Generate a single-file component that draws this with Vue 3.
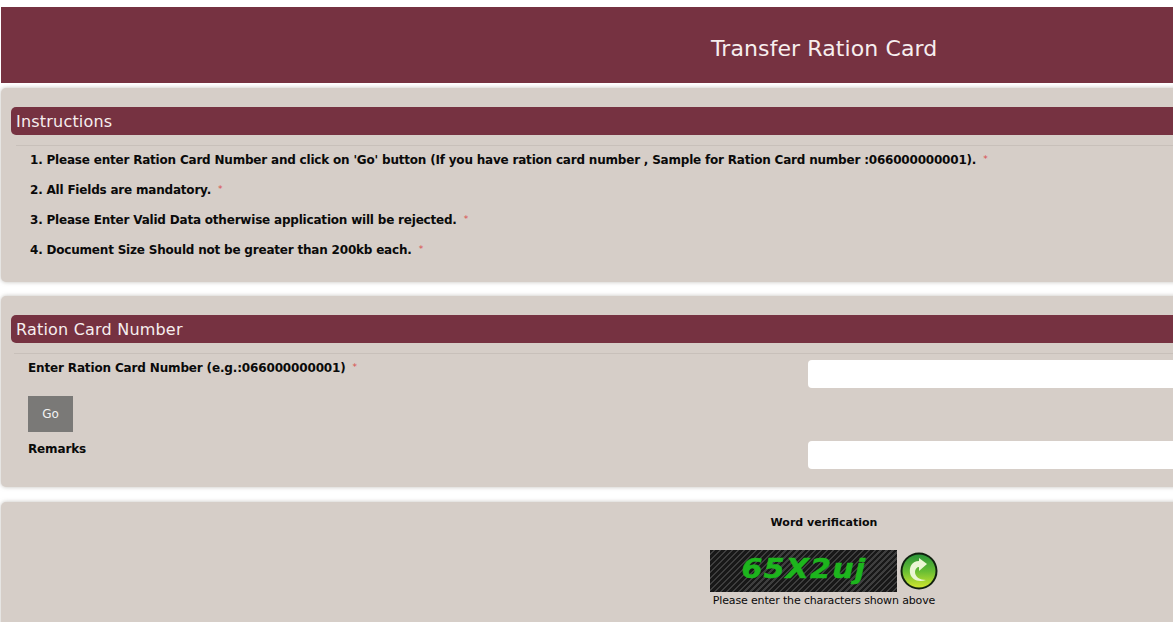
<script setup>
const instructions = [
  "1. Please enter Ration Card Number and click on 'Go' button (If you have ration card number , Sample for Ration Card number :066000000001).",
  '2. All Fields are mandatory.',
  '3. Please Enter Valid Data otherwise application will be rejected.',
  '4. Document Size Should not be greater than 200kb each.',
]
</script>

<template>
  <div class="page">
    <header class="banner"><h1>Transfer Ration Card</h1></header>

    <section class="card card-instructions">
      <h2 class="bar">Instructions</h2>
      <ul class="list">
        <li v-for="item in instructions" :key="item">{{ item }}<span class="req">*</span></li>
      </ul>
    </section>

    <section class="card card-form">
      <h2 class="bar">Ration Card Number</h2>
      <div class="row row-first">
        <label>Enter Ration Card Number (e.g.:066000000001)<span class="req">*</span></label>
        <input type="text" />
      </div>
      <button class="go" type="button">Go</button>
      <div class="row row-remarks">
        <label>Remarks</label>
        <input type="text" />
      </div>
    </section>

    <section class="card card-captcha">
      <div class="verify">
        <div class="verify-title">Word verification</div>
        <div class="captcha-line">
          <div class="captcha"><span>65X2uj</span></div>
          <svg class="refresh" viewBox="0 0 38 38" width="38" height="38" aria-hidden="true">
            <defs>
              <linearGradient id="orb" x1="0" y1="0" x2="0" y2="1">
                <stop offset="0" stop-color="#2a9438" />
                <stop offset="0.5" stop-color="#66bd34" />
                <stop offset="1" stop-color="#cfe62f" />
              </linearGradient>
            </defs>
            <circle cx="19" cy="19" r="18.5" fill="#10200f" />
            <circle cx="19" cy="19" r="16.5" fill="url(#orb)" />
            <path d="M19 9C12 9 9 15 10 21C11 27 18 31 26 28C20 28 15 25 15 20C15 17 17 15 19 15L19 19L27 12L19 6Z" fill="#eaf6d4" />
          </svg>
        </div>
        <div class="verify-hint">Please enter the characters shown above</div>
      </div>
    </section>
  </div>
</template>

<style>
html, body { margin: 0; background: #fff; }
</style>

<style scoped>
.page {
  width: 1173px;
  height: 622px;
  overflow: hidden;
  box-sizing: border-box;
  padding: 7px 0 0 1px;
  font-family: "DejaVu Sans", sans-serif;
  color: #0a0a0a;
}
.banner {
  width: 1240px;
  height: 76px;
  background: #763241;
  box-sizing: border-box;
  padding-left: 710px;
  display: flex;
  align-items: center;
}
.banner h1 {
  margin: 0;
  font-size: 22px;
  font-weight: 400;
  letter-spacing: 0.1px;
  color: #f6eeee;
  white-space: nowrap;
  transform: translateY(3px);
}
.card {
  width: 1240px;
  box-sizing: border-box;
  background: #d6cec8;
  border-radius: 5px;
  box-shadow: 0 0 4px rgba(170, 165, 160, 0.7);
}
.card-instructions { margin-top: 5px; height: 194px; padding: 19px 0 0 10px; }
.card-form { margin-top: 14px; height: 191px; padding: 19px 0 0 10px; }
.card-captcha { margin-top: 15px; height: 130px; }
.bar {
  margin: 0;
  height: 28px;
  line-height: 29px;
  padding-left: 5px;
  background: #763241;
  border-radius: 5px 0 0 5px;
  color: #f6eeee;
  font-size: 16px;
  font-weight: 400;
  letter-spacing: 0.2px;
}
.list {
  list-style: none;
  margin: 10px 0 0 5px;
  padding: 0 0 0 14px;
  border-top: 1px solid #c8c0ba;
  font-size: 12px;
  font-weight: 700;
  letter-spacing: -0.2px;
}
.list li {
  height: 30px;
  line-height: 27px;
  white-space: nowrap;
}
.req {
  color: #d9504f;
  font-size: 9px;
  font-weight: 400;
  margin-left: 7px;
  vertical-align: 2px;
}
.row {
  display: grid;
  grid-template-columns: 780px 1fr;
  margin-left: 17px;
}
.row label {
  font-size: 12px;
  font-weight: 700;
  line-height: 16px;
  letter-spacing: -0.15px;
  white-space: nowrap;
}
.row input {
  display: block;
  width: 100%;
  height: 28px;
  box-sizing: border-box;
  border: none;
  border-radius: 4px;
  background: #fff;
  outline: none;
}
.row-first {
  margin-top: 10px;
  border-top: 1px solid #c8c0ba;
  margin-left: 3px;
  padding: 6px 0 0 14px;
}
.row-first label { margin-top: -1px; }
.go {
  display: block;
  margin: 8px 0 0 17px;
  width: 45px;
  height: 36px;
  padding: 0;
  border: none;
  background: #7a7977;
  color: #f2f2f2;
  font-family: "DejaVu Sans", sans-serif;
  font-size: 12px;
}
.row-remarks { margin-top: 9px; }
.verify {
  width: 240px;
  margin-left: 703px;
  display: flex;
  flex-direction: column;
  align-items: center;
  padding-top: 13px;
}
.verify-title {
  font-size: 11px;
  font-weight: 700;
  line-height: 14px;
  margin-top: 1px;
}
.captcha-line {
  display: flex;
  align-items: center;
  gap: 3px;
  margin-top: 20px;
  align-self: flex-start;
  margin-left: 6px;
}
.captcha {
  width: 187px;
  height: 42px;
  line-height: 38px;
  text-align: center;
  background: repeating-linear-gradient(135deg, #181818 0 2.6px, #3e3e3e 2.6px 4.2px);
  color: #1db51d;
  font-family: "DejaVu Sans", sans-serif;
  font-size: 26px;
  font-weight: 700;
  font-style: italic;
  letter-spacing: 1px;
  -webkit-text-stroke: 0.5px #1db51d;
}
.captcha span {
  display: inline-block;
  transform: scaleX(1.16);
}
.refresh { flex: none; }
.verify-hint {
  font-size: 11px;
  line-height: 13px;
  margin-top: 2px;
  letter-spacing: -0.15px;
  white-space: nowrap;
}
</style>
